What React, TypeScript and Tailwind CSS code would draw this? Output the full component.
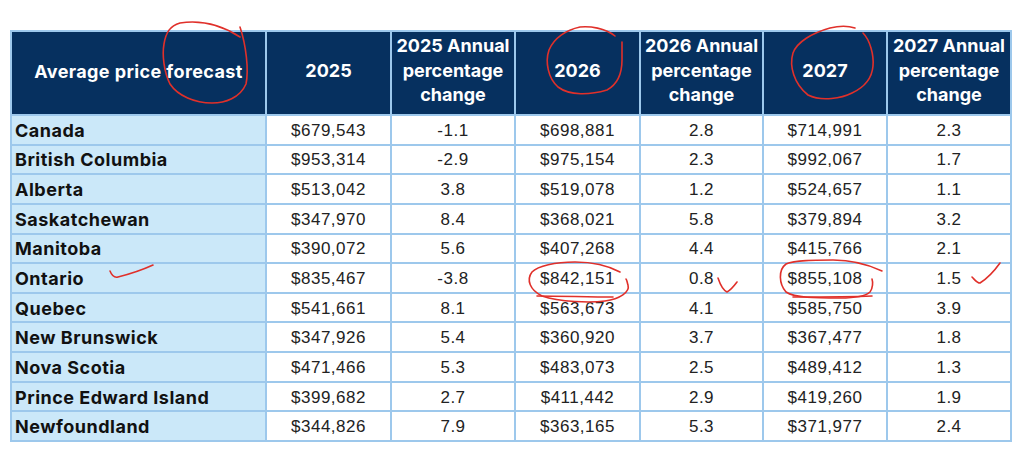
import React from "react";

type Row = {
  name: string;
  p25: string;
  c25: string;
  p26: string;
  c26: string;
  p27: string;
  c27: string;
};

const rows: Row[] = [
  { name: "Canada", p25: "$679,543", c25: "-1.1", p26: "$698,881", c26: "2.8", p27: "$714,991", c27: "2.3" },
  { name: "British Columbia", p25: "$953,314", c25: "-2.9", p26: "$975,154", c26: "2.3", p27: "$992,067", c27: "1.7" },
  { name: "Alberta", p25: "$513,042", c25: "3.8", p26: "$519,078", c26: "1.2", p27: "$524,657", c27: "1.1" },
  { name: "Saskatchewan", p25: "$347,970", c25: "8.4", p26: "$368,021", c26: "5.8", p27: "$379,894", c27: "3.2" },
  { name: "Manitoba", p25: "$390,072", c25: "5.6", p26: "$407,268", c26: "4.4", p27: "$415,766", c27: "2.1" },
  { name: "Ontario", p25: "$835,467", c25: "-3.8", p26: "$842,151", c26: "0.8", p27: "$855,108", c27: "1.5" },
  { name: "Quebec", p25: "$541,661", c25: "8.1", p26: "$563,673", c26: "4.1", p27: "$585,750", c27: "3.9" },
  { name: "New Brunswick", p25: "$347,926", c25: "5.4", p26: "$360,920", c26: "3.7", p27: "$367,477", c27: "1.8" },
  { name: "Nova Scotia", p25: "$471,466", c25: "5.3", p26: "$483,073", c26: "2.5", p27: "$489,412", c27: "1.3" },
  { name: "Prince Edward Island", p25: "$399,682", c25: "2.7", p26: "$411,442", c26: "2.9", p27: "$419,260", c27: "1.9" },
  { name: "Newfoundland", p25: "$344,826", c25: "7.9", p26: "$363,165", c26: "5.3", p27: "$371,977", c27: "2.4" },
];

const headers = [
  "2025",
  "2025 Annual percentage change",
  "2026",
  "2026 Annual percentage change",
  "2027",
  "2027 Annual percentage change",
];

// hand-drawn red marks on top of the table
const Marks = () => (
  <svg
    className="pointer-events-none absolute left-0 top-0"
    width={1024}
    height={462}
    fill="none"
    stroke="#e0302a"
    strokeWidth={1.6}
    strokeLinecap="round"
    strokeLinejoin="round"
  >
    <path d="M240 27 C246 45 249 70 246 84 C240 98 225 103 212 103 C195 103 178 96 170 84 C164 72 162 55 164 44 C166 32 170 26 180 23 C200 20 220 24 240 37" />
    <path d="M615 36 C605 28 590 26 580 27 C566 30 554 38 549 50 C545 62 548 78 558 87 C570 96 590 95 607 90 C618 84 622 72 622 60 C622 52 622 47 622 42" />
    <path d="M855 28 C846 25 838 26 830 28 C812 33 797 42 793 53 C789 66 794 84 808 95 C822 102 842 98 852 93 C865 87 872 78 873 66 C874 55 870 40 863 33" />
    <path d="M110 271 C112 276 114 278 118 277 C130 274 142 270 153 265" />
    <path d="M620 272 C605 264 590 262 575 262 C555 262 538 266 532 272 C526 280 530 290 542 296 C560 302 590 303 605 301 C620 299 630 292 628 285 C627 282 627 280 626 279" />
    <path d="M537 296 C560 296 590 297 613 297" />
    <path d="M718 278 C720 284 723 290 727 292 C731 290 734 286 737 282" />
    <path d="M882 271 C865 263 850 260 833 260 C815 260 795 260 786 264 C778 270 779 284 786 292 C795 298 815 298 840 298 C855 298 866 296 870 292 C873 288 873 282 872 279" />
    <path d="M793 297 C820 297 850 297 872 296" />
    <path d="M972 277 C975 280 977 283 980 283 C988 278 995 270 1000 263" />
  </svg>
);

export default function App() {
  return (
    <div className="relative h-[462px] w-[1024px] overflow-hidden bg-white">
      <div className="pt-[30px] pl-[10px]">
        <div className="grid h-[412px] w-[1002px] grid-cols-[253px_123px_122px_123px_121px_122px_122px] grid-rows-[82px_repeat(11,minmax(0,1fr))] gap-[2px] bg-[#9dc8ec] p-[2px]">
          <div className="flex items-center justify-center pb-[4px] bg-[#06305f] font-['Inter',sans-serif] text-[18px] font-bold tracking-[0.4px] text-white">
            Average price forecast
          </div>
          {headers.map((h, i) => (
            <div
              key={i}
              className="flex items-center justify-center bg-[#06305f] pb-[4px] text-center font-['Inter',sans-serif] text-[18px] font-bold leading-[24.5px] text-white"
            >
              {h}
            </div>
          ))}
          {rows.map((r) => (
            <React.Fragment key={r.name}>
              <div className="flex items-center bg-[#cbe8f9] pl-[3px] pt-[2px] font-['Inter',sans-serif] text-[18px] font-bold leading-[22px] tracking-[0.5px] text-[#111]">
                {r.name}
              </div>
              {[r.p25, r.c25, r.p26, r.c26, r.p27, r.c27].map((v, i) => (
                <div
                  key={i}
                  className="flex items-center justify-center bg-white pt-[2px] font-['Liberation_Sans',sans-serif] text-[17px] leading-[22px] tracking-[0.5px] text-[#222]"
                >
                  {v}
                </div>
              ))}
            </React.Fragment>
          ))}
        </div>
      </div>
      <Marks />
    </div>
  );
}
